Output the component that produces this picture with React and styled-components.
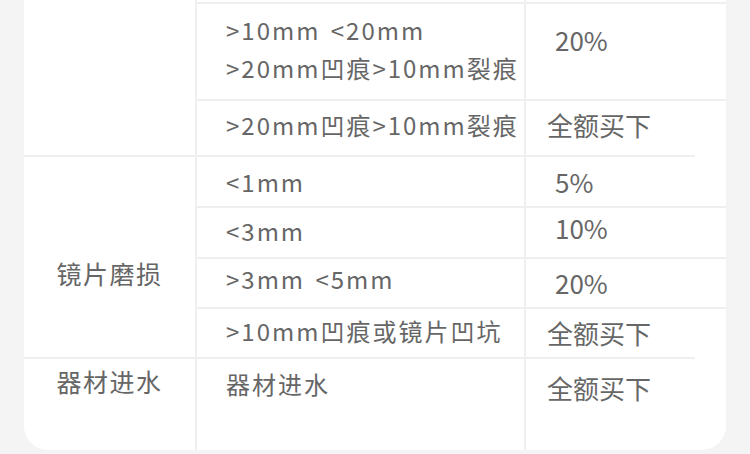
import React from "react";
import styled, { createGlobalStyle } from "styled-components";

const GlobalStyle = createGlobalStyle`
  html, body {
    margin: 0;
    padding: 0;
    background: #f4f4f4;
  }
  body {
    font-family: "Noto Sans CJK SC", "Noto Sans", sans-serif;
    color: #666;
  }
`;

const LINE = "#efefef";

const groups = [
  {
    label: "",
    rows: [
      { h: 2, stub: true },
      {
        h: 97,
        condTop: 7,
        valueTop: 17,
        cond: [">10mm <20mm", ">20mm凹痕>10mm裂痕"],
        value: "20%",
        indent: 8,
      },
      { h: 56, cond: [">20mm凹痕>10mm裂痕"], value: "全额买下", lift: 6 },
    ],
  },
  {
    label: "镜片磨损",
    labelTop: 97,
    divider: true,
    rows: [
      { h: 51, cond: ["<1mm"], value: "5%", indent: 8 },
      { h: 51, cond: ["<3mm"], value: "10%", indent: 8, lift: 4, valueLift: 10 },
      { h: 50, cond: [">3mm <5mm"], value: "20%", indent: 8, lift: 8, valueLift: 0 },
      { h: 50, cond: [">10mm凹痕或镜片凹坑"], value: "全额买下", lift: 4, valueLift: 0 },
    ],
  },
  {
    label: "器材进水",
    labelTop: 3,
    divider: true,
    fill: true,
    rows: [
      {
        h: 93,
        condTop: 6,
        valueTop: 10,
        cond: ["器材进水"],
        value: "全额买下",
      },
    ],
  },
];

function App() {
  return (
    <Page>
      <GlobalStyle />
      <Card>
        {groups.map((g, gi) => (
          <Group key={gi} $fill={g.fill}>
            <LabelCell $divider={g.divider} $top={g.labelTop}>
              {g.label}
            </LabelCell>
            <Body>
              {g.rows.map((r, ri) => (
                <Row
                  key={ri}
                  $h={r.h}
                  $fill={g.fill && ri === g.rows.length - 1}
                >
                  <CondCell $border={!r.stub} $top={r.condTop} $lift={r.lift}>
                    {r.cond && r.cond.map((t, i) => <Line key={i}>{t}</Line>)}
                  </CondCell>
                  <ValueCell
                    $border={!r.stub}
                    $short={g.divider && ri === 0}
                    $top={r.valueTop}
                    $lift={r.valueLift ?? r.lift}
                    $indent={r.indent}
                  >
                    {r.value}
                  </ValueCell>
                </Row>
              ))}
            </Body>
          </Group>
        ))}
      </Card>
    </Page>
  );
}

const Page = styled.div`
  box-sizing: border-box;
  height: 454px;
  padding: 0 24px 4px;
  display: flex;
  flex-direction: column;
`;

const Card = styled.div`
  flex: 1;
  display: flex;
  flex-direction: column;
  background: #fff;
  border-radius: 0 0 24px 24px;
  overflow: hidden;
`;

const Group = styled.div`
  display: flex;
  flex: ${(p) => (p.$fill ? 1 : "none")};
`;

const LabelCell = styled.div`
  box-sizing: border-box;
  width: 173px;
  flex: none;
  border-right: 2px solid ${LINE};
  border-top: ${(p) => (p.$divider ? `2px solid ${LINE}` : "none")};
  padding-top: ${(p) => p.$top || 0}px;
  text-align: center;
  font-size: 25px;
  line-height: 38px;
  letter-spacing: 1.5px;
  color: #666;
`;

const Body = styled.div`
  flex: 1;
  display: flex;
  flex-direction: column;
`;

const Row = styled.div`
  display: flex;
  height: ${(p) => (p.$fill ? "auto" : `${p.$h}px`)};
  flex: ${(p) => (p.$fill ? 1 : "none")};
`;

const Cell = styled.div`
  box-sizing: border-box;
  display: flex;
  flex-direction: column;
  justify-content: ${(p) => (p.$top != null ? "flex-start" : "center")};
  padding-top: ${(p) => p.$top || 0}px;
  padding-bottom: ${(p) => p.$lift || 0}px;
  line-height: 38px;
  white-space: nowrap;
`;

const CondCell = styled(Cell)`
  width: 329px;
  flex: none;
  border-right: 2px solid ${LINE};
  border-top: ${(p) => (p.$border ? `2px solid ${LINE}` : "none")};
  padding-left: 29px;
  font-size: 24px;
  letter-spacing: 2px;
  word-spacing: 3px;
`;

const ValueCell = styled(Cell)`
  flex: 1;
  padding-left: ${(p) => 21 + (p.$indent || 0)}px;
  border-top: ${(p) =>
    p.$border && !p.$short ? `2px solid ${LINE}` : "none"};
  padding-top: ${(p) => (p.$top || 0) + (p.$short ? 2 : 0)}px;
  background: ${(p) =>
    p.$short
      ? `linear-gradient(${LINE}, ${LINE}) top left / calc(100% - 31px) 2px no-repeat`
      : "none"};
  font-size: 26px;
`;

const Line = styled.span`
  display: block;
`;

export default App;
